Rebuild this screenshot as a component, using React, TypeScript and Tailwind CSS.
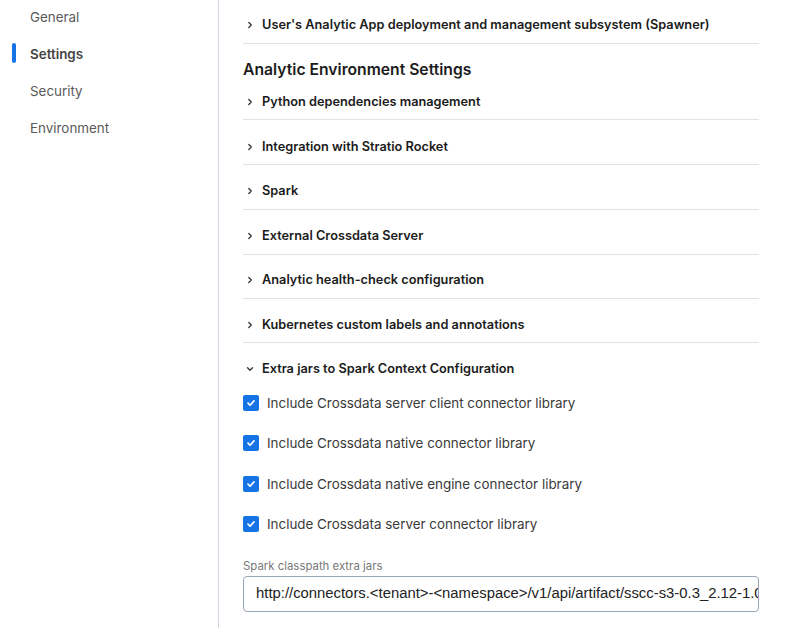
import React from "react";

const font = { fontFamily: "Inter, 'Noto Sans', sans-serif" };

function Chevron({ open }: { open?: boolean }) {
  return (
    <svg width="8" height="8" viewBox="0 0 8 8" className="shrink-0 text-[#333]">
      {open ? (
        <path d="M1.5 2.8 L4 5.3 L6.5 2.8" fill="none" stroke="currentColor" strokeWidth="1.3" strokeLinecap="round" strokeLinejoin="round" />
      ) : (
        <path d="M2.8 1.5 L5.3 4 L2.8 6.5" fill="none" stroke="currentColor" strokeWidth="1.3" strokeLinecap="round" strokeLinejoin="round" />
      )}
    </svg>
  );
}

function Row({ title, pt = "pt-[17px]", open, border = true }: { title: string; pt?: string; open?: boolean; border?: boolean }) {
  return (
    <div className={`${pt} pb-[8.5px] ${border ? "border-b border-[#e2e2e2]" : ""}`}>
      <div className="flex items-center gap-[8px] pl-[3px] h-[18px]">
        <Chevron open={open} />
        <span className="text-[12.75px] font-semibold text-[#1c1c1c] leading-[18px]">{title}</span>
      </div>
    </div>
  );
}

function Check({ label }: { label: string }) {
  return (
    <div className="flex items-center h-[40.5px] gap-2">
      <div className="w-4 h-4 rounded-[2px] bg-[#1673e6] flex items-center justify-center">
        <svg width="10" height="10" viewBox="0 0 10 10">
          <path d="M2 5.2 L4.1 7.2 L8 2.9" fill="none" stroke="white" strokeWidth="1.7" strokeLinecap="round" strokeLinejoin="round" />
        </svg>
      </div>
      <span className="text-[13.4px] text-[#3a3a3a]">{label}</span>
    </div>
  );
}

export default function App() {
  return (
    <div className="w-[797px] h-[628px] bg-white flex overflow-hidden" style={font}>
      <aside className="w-[219px] shrink-0 border-r border-[#cdd6e2] h-full">
        <nav className="flex flex-col -mt-[2px]">
          {["General", "Settings", "Security", "Environment"].map((n) => (
            <div key={n} className="relative h-[37.3px] flex items-center pl-[30px]">
              {n === "Settings" && <span className="absolute left-[12px] top-[8px] w-[4px] h-[20px] rounded-full bg-[#1673e6]" />}
              <span className={`text-[13.4px] ${n === "Settings" ? "font-semibold text-[#444]" : "text-[#5a5a5a]"}`}>{n}</span>
            </div>
          ))}
        </nav>
      </aside>
      <main className="flex-1 min-w-0 pl-[24px] pr-[38px]">
        <Row title="User's Analytic App deployment and management subsystem (Spawner)" pt="pt-4" />
        <h2 className="mt-[14px] text-[15.7px] leading-6 font-semibold text-[#1c1c1c]">Analytic Environment Settings</h2>
        <Row title="Python dependencies management" pt="pt-[11px]" />
        <Row title="Integration with Stratio Rocket" pt="pt-[17.5px]" />
        <Row title="Spark" />
        <Row title="External Crossdata Server" pt="pt-[17.5px]" />
        <Row title="Analytic health-check configuration" pt="pt-[16.5px]" />
        <Row title="Kubernetes custom labels and annotations" />
        <Row title="Extra jars to Spark Context Configuration" open border={false} />
        <div className="-mt-[4px]">
          <Check label="Include Crossdata server client connector library" />
          <Check label="Include Crossdata native connector library" />
          <Check label="Include Crossdata native engine connector library" />
          <Check label="Include Crossdata server connector library" />
        </div>
        <div className="mt-[13px]">
          <div className="text-[11.4px] text-[#777] leading-4">Spark classpath extra jars</div>
          <div className="mt-[2px] h-[36px] border border-[#9aa6b6] rounded-[4px] flex items-center pl-[12px] overflow-hidden">
            <span className="text-[14.85px] text-[#222] whitespace-nowrap" style={{ fontFamily: "'Liberation Sans', Arial, sans-serif" }}>
              http://connectors.&lt;tenant&gt;-&lt;namespace&gt;/v1/api/artifact/sscc-s3-0.3_2.12-1.0
            </span>
          </div>
        </div>
      </main>
    </div>
  );
}
